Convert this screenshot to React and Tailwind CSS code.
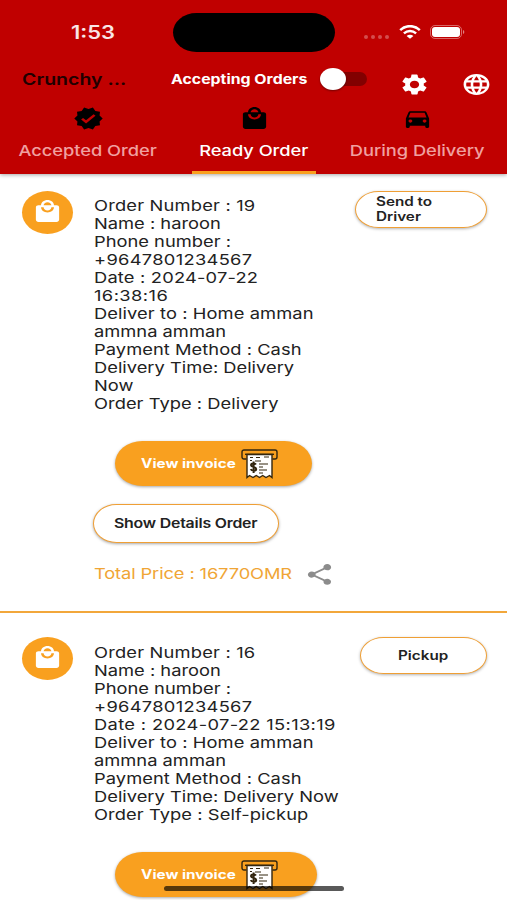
import { MdVerified, MdLocalMall, MdDirectionsCar, MdSettings, MdLanguage, MdShare } from 'react-icons/md';
import clsx from 'clsx';

const orders = [
  {
    id: 19,
    lines: [
      ['Order Number : 19', 'tracking-[0.15px]'],
      ['Name : haroon'],
      ['Phone number :'],
      ['+9647801234567', 'tracking-[0.25px]'],
      ['Date : 2024-07-22', 'tracking-[0.15px]'],
      ['16:38:16', 'tracking-[0.35px]'],
      ['Deliver to : Home amman', 'tracking-[0.07px]'],
      ['ammna amman'],
      ['Payment Method : Cash', 'tracking-[0.04px]'],
      ['Delivery Time: Delivery'],
      ['Now'],
      ['Order Type : Delivery', 'tracking-[0.03px]'],
    ],
    linesClass: 'pt-[6px]',
    action: ['Send to', 'Driver'],
    actionClass: 'w-[132px] pl-[20px]',
    invoiceClass: 'w-[197px]',
    total: '16770OMR',
  },
  {
    id: 16,
    lines: [
      ['Order Number : 16', 'tracking-[0.15px]'],
      ['Name : haroon'],
      ['Phone number :'],
      ['+9647801234567', 'tracking-[0.25px]'],
      ['Date : 2024-07-22 15:13:19', 'tracking-[0.28px]'],
      ['Deliver to : Home amman', 'tracking-[0.07px]'],
      ['ammna amman'],
      ['Payment Method : Cash', 'tracking-[0.04px]'],
      ['Delivery Time: Delivery Now'],
      ['Order Type : Self-pickup', 'tracking-[0.06px]'],
    ],
    linesClass: 'pt-[7px]',
    action: ['Pickup'],
    actionClass: 'w-[127px] pl-[37px]',
    invoiceClass: 'w-[202px]',
  },
];

const tabs = [
  { label: 'Accepted Order', icon: MdVerified, className: 'w-[176px]' },
  { label: 'Ready Order', icon: MdLocalMall, className: 'w-[156px]', active: true },
  { label: 'During Delivery', icon: MdDirectionsCar, className: 'w-[170px]' },
];

// Wide lettering used across the app
const Wide = ({ className, children }) => (
  <span className={clsx('block shrink-0 whitespace-nowrap scale-x-[1.22]', className)}>{children}</span>
);

const StatusBar = () => (
  <div className="flex h-[64px] items-center">
    <Wide className="ml-[71px] w-[102px] origin-left text-[18px] font-semibold text-white/90">1:53</Wide>
    <div className="h-[39px] w-[162px] shrink-0 rounded-[24px/20px] bg-black" />
    <div className="ml-[29px] mt-[9px] flex gap-[3px]">
      {[0, 1, 2, 3].map((i) => (
        <span key={i} className="size-[4px] rounded-full bg-white/30" />
      ))}
    </div>
    <svg className="ml-[10px] h-[14px] w-[22px]" viewBox="0 0 22 14" preserveAspectRatio="none" fill="none" stroke="white">
      <path d="M1.2 5.1C6.8-.2 15.2-.2 20.8 5.1" strokeWidth="2.5" />
      <path d="M4.9 8.4c3.5-3.2 8.7-3.2 12.2 0" strokeWidth="2.4" />
      <path d="M7.6 10.9c1.900-1.700 4.900-1.700 6.800 0L11 13.800z" fill="white" stroke="none" />
    </svg>
    <svg className="ml-[9px] h-[14px] w-[36px]" viewBox="0 0 36 14">
      <rect x=".5" y=".5" width="31" height="13" rx="4.5" fill="none" stroke="white" strokeOpacity=".4" />
      <rect x="2" y="2" width="28" height="10" rx="3" fill="white" />
      <path d="M33 5v4c1.8-.6 1.8-3.4 0-4z" fill="white" fillOpacity=".5" />
    </svg>
  </div>
);

const Header = () => (
  <header className="relative h-[174px] bg-[#c00000] shadow-[0_1px_4px_rgba(0,0,0,0.35)]">
    <StatusBar />
    <div className="flex h-[30px] items-center pl-[22px]">
      <Wide className="w-[149px] origin-left text-[16px] font-semibold text-[#200000]">Crunchy ...</Wide>
      <Wide className="w-[149px] origin-left pt-px text-[13px] font-bold text-white">Accepting Orders</Wide>
      <div className="relative flex h-[22px] w-[47px] items-center justify-end">
        <span className="h-[14px] w-[36px] rounded-full bg-[#820000]" />
        <span className="absolute left-0 top-0 h-[22px] w-[26px] rounded-[50%] bg-white shadow-[0_1px_2px_rgba(0,0,0,0.4)]" />
      </div>
      <MdSettings className="ml-[32px] mt-[10px] h-[25px] w-[31px] text-white" preserveAspectRatio="none" />
      <MdLanguage className="ml-[31px] mt-[10px] h-[25px] w-[31px] text-white" preserveAspectRatio="none" />
    </div>
    <nav className="flex h-[80px]">
      {tabs.map(({ label, icon: Icon, className, active }) => (
        <div key={label} className={clsx('flex flex-col items-center pt-[12px]', className)}>
          <Icon className="h-[25px] w-[31px] text-black" preserveAspectRatio="none" />
          <Wide className={clsx('mt-[8px] text-[15px] leading-[24px] font-medium tracking-[-0.04px]', active ? 'text-white' : 'text-[#f0a0a0]')}>
            {label}
          </Wide>
          {active && <span className="mt-[8px] h-[3px] w-[124px] bg-[#f9a01f]" />}
        </div>
      ))}
    </nav>
  </header>
);

const ReceiptIcon = () => (
  <svg className="h-[30px] w-[37px]" viewBox="0 0 37 30" fill="none" stroke="#33260f" strokeWidth="1.4">
    <path d="M5.500 10H3a2 2 0 0 1-2-2V3a2 2 0 0 1 2-2h31a2 2 0 0 1 2 2v5a2 2 0 0 1-2 2h-2.500" fill="#f9a01f" />
    <path d="M6 5.500h25v23l-2.500-2-3.500 2-3.300-2-3.200 2-3.200-2-3.300 2-3.500-2-2.500 2z" fill="white" />
    <path d="M4 5.300h29" />
    <path d="M9 8.500h3M15 8.500h4M23 8h5M9 11.500h2M14 12h6M18 15h9M18 18h4M18 21h8M18 24h4" strokeWidth="1.100" />
    <path d="M15 15.500c-1-1.500-5-1.500-5 .7 0 2.200 5.200 1.300 5.200 3.700 0 2.300-4.600 2.200-5.500.2M12.600 12.500v11.500" strokeWidth="2" />
  </svg>
);

const OrderFooter = ({ total }) => (
  <>
    <button className="mt-[18px] -ml-px flex h-[39px] w-[186px] items-center rounded-[24px/20px] border border-[#ef9f35] bg-white pl-[20px] shadow-[0_1px_3px_rgba(0,0,0,0.35)]">
      <Wide className="origin-left text-[13px] font-semibold tracking-[-0.17px] text-[#222]">Show Details Order</Wide>
    </button>
    <div className="mt-[18px] flex h-[26px] items-center">
      <Wide className="w-[210px] origin-left pt-px text-[15px] tracking-[-0.1px] text-[#f0a535]">Total Price : {total}</Wide>
      <MdShare className="h-[25px] w-[31px] shrink-0 text-[#8c8c8c]" preserveAspectRatio="none" />
    </div>
  </>
);

const OrderCard = ({ order }) => (
  <article className="flex h-[437px] pl-[22px] pr-[20px] pt-[17px]">
    <div className="flex h-[43px] w-[51px] shrink-0 items-center justify-center rounded-[50%] bg-[#f9a01f]">
      <MdLocalMall className="mb-[2px] h-[25px] w-[31px] text-white" preserveAspectRatio="none" />
    </div>
    <div className="ml-[21px] w-[241px] shrink-0">
      <div className={clsx('text-[15px] leading-[18px] text-[#222]', order.linesClass)}>
        {order.lines.map(([line, spacing]) => (
          <Wide key={line} className={clsx('origin-left', spacing)}>{line}</Wide>
        ))}
      </div>
      <button className={clsx('ml-[21px] mt-[28px] flex h-[45px] items-center rounded-[28px/23px] bg-[#f9a01f] pl-[26px] shadow-[0_1px_3px_rgba(0,0,0,0.35)]', order.invoiceClass)}>
        <Wide className="w-[100px] origin-left pt-[2px] text-left text-[12.5px] font-bold text-white">View invoice</Wide>
        <ReceiptIcon />
      </button>
      {order.total && <OrderFooter total={order.total} />}
    </div>
    <button className={clsx('ml-auto flex h-[37px] flex-col items-start justify-center rounded-[24px/19px] border border-[#ef9f35] bg-white pb-px text-[12.5px] leading-[15px] font-semibold text-[#222] shadow-[0_1px_3px_rgba(0,0,0,0.3)]', order.actionClass)}>
      {order.action.map((word) => (
        <Wide key={word} className="origin-left">{word}</Wide>
      ))}
    </button>
  </article>
);

export default function App() {
  return (
    <div className="relative h-[900px] w-[507px] overflow-hidden bg-white font-['Inter',sans-serif]">
      <Header />
      <main>
        {orders.map((order) => (
          <section key={order.id}>
            <OrderCard order={order} />
            <div className="mb-[7px] h-[2px] bg-[#f2a73b]" />
          </section>
        ))}
      </main>
      <div className="absolute bottom-[9px] left-[164px] h-[5px] w-[180px] rounded-full bg-black/65" />
    </div>
  );
}
